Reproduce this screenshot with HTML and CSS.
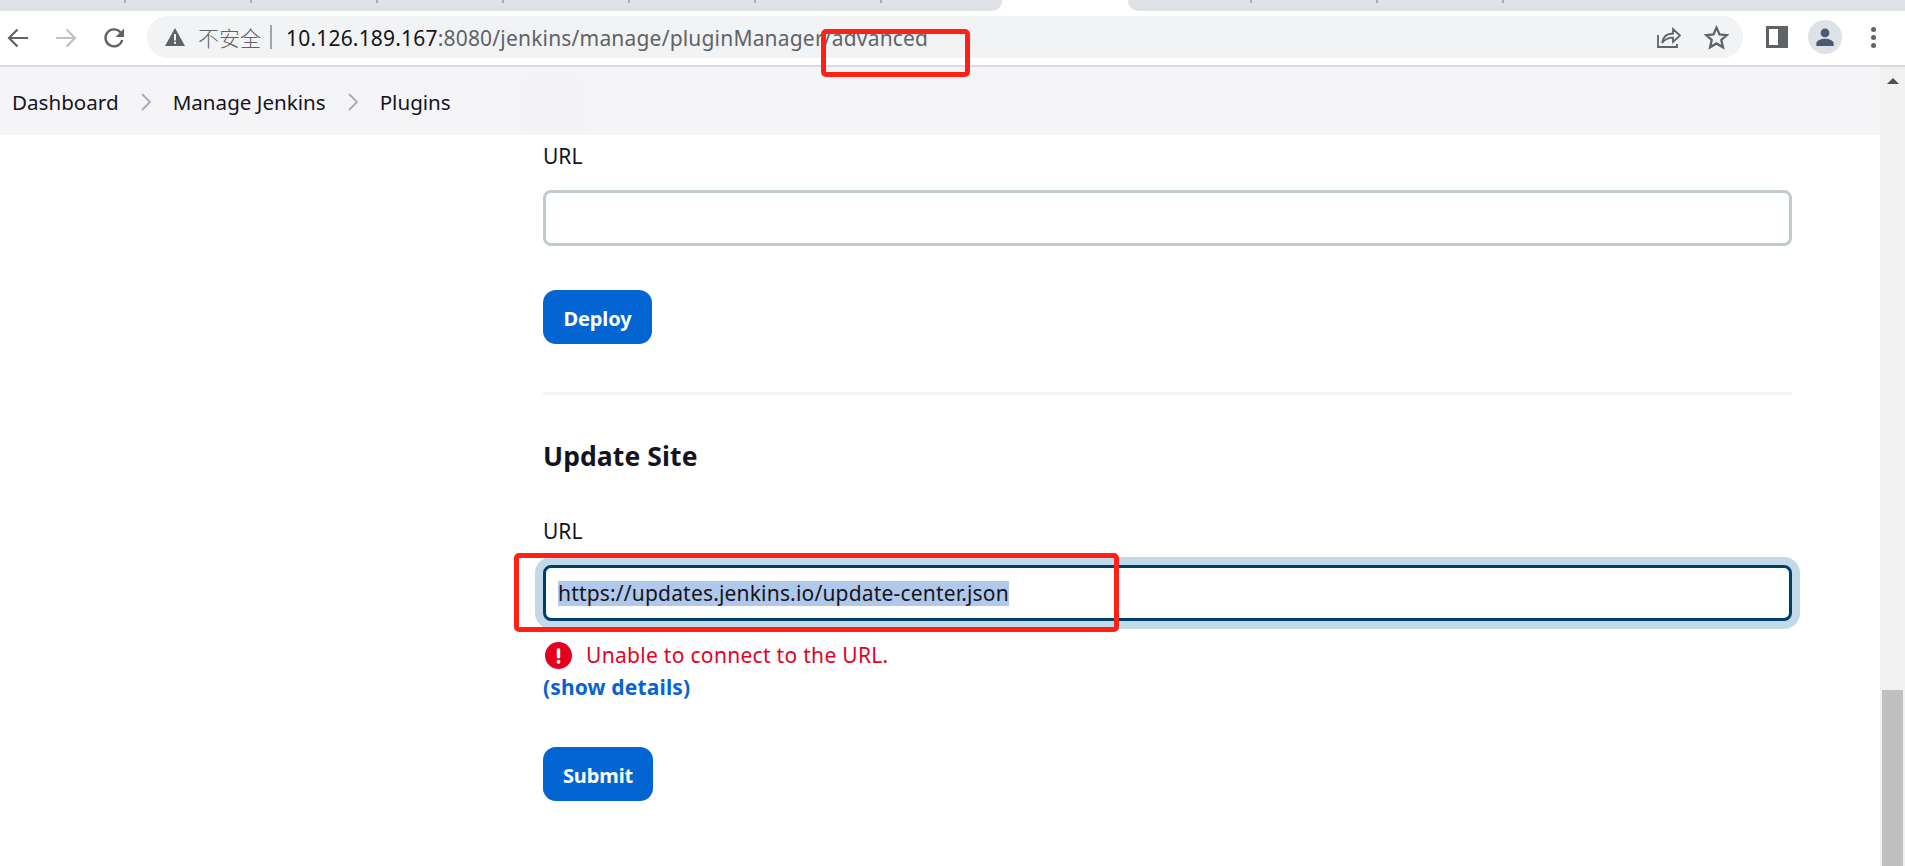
FILE: index.html
```html
<!DOCTYPE html>
<html lang="en">
<head>
<meta charset="utf-8">
<title>Jenkins – Plugins</title>
<link rel="stylesheet" href="styles.css">
</head>
<body>
<header class="browser">
  <div class="tabstrip">
    <div class="tabs-left"><i></i><i></i><i></i><i></i><i></i><i></i><i></i></div>
    <div class="tab-active"></div>
    <div class="tabs-right"><i></i><i></i><i></i></div>
  </div>
  <div class="toolbar">
    <div class="nav">
      <svg class="nav-icon" viewBox="0 0 24 24"><path d="M22 12H4M11.500 3.500 3 12l8.500 8.500" fill="none" stroke="#5f6368" stroke-width="2.200"/></svg>
      <svg class="nav-icon" viewBox="0 0 24 24"><path d="M2 12h18M12.500 3.500 21 12l-8.500 8.500" fill="none" stroke="#bfc1c4" stroke-width="2.200"/></svg>
      <svg class="nav-icon" viewBox="0 0 24 24"><path d="M20.200 14a8.500 8.500 0 1 1-1.900-7.800" fill="none" stroke="#5f6368" stroke-width="2.300"/><path d="M22 2.500V11h-8.500z" fill="#5f6368"/></svg>
    </div>
    <div class="omnibox">
      <svg class="warn" viewBox="0 0 20 18"><path d="M10 0 20 18H0z" fill="#5f6368"/><rect x="9" y="6" width="2" height="6.500" fill="#f1f3f4"/><rect x="9" y="13.800" width="2" height="2" fill="#f1f3f4"/></svg>
      <span class="insecure">不安全</span>
      <span class="omni-sep"></span>
      <span class="address"><b class="host">10.126.189.167</b>:8080/jenkins/manage/pluginManager/advanced</span>
      <svg class="share" viewBox="0 0 24 22"><path d="M1 9v12h19v-3M5 17c1-6 5-9.500 11-9.500V3l7 6.500-7 6.500v-4.300c-4.500 0-8 1.500-11 5.300z" fill="none" stroke="#5f6368" stroke-width="1.800"/></svg>
      <svg class="star" viewBox="0 0 24 24"><path d="m12 2.500 2.900 6.500 7.100.700-5.400 4.700 1.600 7-6.200-3.700-6.200 3.700 1.600-7L2 9.700 9.100 9z" fill="none" stroke="#5f6368" stroke-width="2.200"/></svg>
    </div>
    <div class="panel-icon"><span></span></div>
    <div class="avatar">
      <svg viewBox="0 0 22 22"><circle cx="11" cy="6.500" r="4.800" fill="#4b5a73"/><path d="M1.500 21v-3c0-3 5-5 9.500-5s9.500 2 9.500 5v3z" fill="#4b5a73"/></svg>
    </div>
    <div class="menu-dots"><i></i><i></i><i></i></div>
  </div>
</header>

<div class="viewport">
  <div class="page">
    <nav class="breadcrumb">
      <span class="ghost"></span>
      <a class="crumb">Dashboard</a>
      <svg class="chev" viewBox="0 0 10 18"><path d="m1 1 8 8-8 8" fill="none" stroke="#a9a9b8" stroke-width="1.800"/></svg>
      <a class="crumb">Manage Jenkins</a>
      <svg class="chev" viewBox="0 0 10 18"><path d="m1 1 8 8-8 8" fill="none" stroke="#a9a9b8" stroke-width="1.800"/></svg>
      <a class="crumb">Plugins</a>
    </nav>
    <main class="content">
      <section class="deploy">
        <label class="label">URL</label>
        <div class="field"></div>
        <button class="btn btn-deploy">Deploy</button>
      </section>
      <hr class="rule">
      <section class="site">
        <h2 class="title">Update Site</h2>
        <label class="label">URL</label>
        <div class="field field-focus"><span class="selected">https://updates.jenkins.io/update-center.json</span></div>
        <div class="error">
          <svg class="error-icon" viewBox="0 0 28 28"><circle cx="14" cy="14" r="14" fill="#e6001f"/><rect x="12.200" y="6.500" width="3.600" height="10.500" rx="1.600" fill="#fff"/><circle cx="14" cy="20.500" r="2" fill="#fff"/></svg>
          <span>Unable to connect to the URL.</span>
        </div>
        <a class="details">(show details)</a>
        <button class="btn btn-submit">Submit</button>
      </section>
    </main>
  </div>
  <aside class="scrollbar">
    <span class="arrow"></span>
    <span class="thumb"></span>
  </aside>
</div>

<div class="mark mark-address"></div>
<div class="mark mark-field"></div>
</body>
</html>
```

FILE: styles.css
```css
* { box-sizing: border-box; }
html, body { margin: 0; height: 100%; overflow: hidden; }
body {
  background: #fff;
  color: #14141f;
  font-family: "Noto Sans", "Noto Sans CJK SC", sans-serif;
  display: flex;
  flex-direction: column;
}

/* browser chrome */
.browser { flex: none; height: 67px; border-bottom: 2px solid #d9dadd; background: #fff; }
.tabstrip { display: flex; height: 11px; }
.tabs-left, .tabs-right { background: #dee1e6; display: flex; }
.tabs-left { width: 1002px; border-bottom-right-radius: 10px; padding-left: 124px; gap: 124px; }
.tabs-right { flex: 1; border-bottom-left-radius: 10px; padding-left: 122px; gap: 124px; }
.tabs-left i, .tabs-right i { width: 2px; height: 3px; background: #a9acb2; }
.tab-active { width: 126px; background: #fff; }
.toolbar { display: flex; align-items: center; height: 54px; padding: 0 0 0 6px; position: relative; }
.nav { display: flex; gap: 24px; width: 141px; align-items: center; }
.nav-icon { width: 24px; height: 24px; flex: none; }
.omnibox {
  width: 1596px; height: 42px; margin-top: -2px;
  border-radius: 21px; background: #f1f3f4;
  display: flex; align-items: center; padding-left: 18px;
}
.warn { width: 20px; height: 18px; flex: none; }
.insecure { margin-left: 13px; font-size: 21px; color: #5f6368; font-family: "Noto Sans CJK SC", sans-serif; font-weight: 300; line-height: 1; }
.omni-sep { width: 2px; height: 24px; background: #a2a5a8; margin: 0 14px 0 9px; }
.address { font-size: 21px; color: #5f6368; flex: 1; white-space: nowrap; letter-spacing: 0.19px; padding-top: 2px; }
.host { font-weight: 400; color: #14141a; }
.share { width: 24px; height: 22px; flex: none; margin-right: 23px; }
.star { width: 25px; height: 25px; flex: none; margin-right: 14px; }
.panel-icon {
  width: 22px; height: 22px; margin: -2px 0 0 23px;
  background: #5f6368; padding: 3px 10px 3px 3px;
}
.panel-icon span { display: block; height: 100%; background: #fff; }
.avatar {
  width: 34px; height: 34px; margin: -2px 0 0 20px; border-radius: 50%;
  background: #dee1e6; display: flex; align-items: center; justify-content: center;
}
.avatar svg { width: 20px; height: 20px; }
.menu-dots { display: flex; flex-direction: column; gap: 3px; margin: -2px 0 0 29px; }
.menu-dots i { width: 5px; height: 5px; border-radius: 50%; background: #5f6368; }

/* viewport */
.viewport { flex: 1; display: flex; min-height: 0; }
.page { flex: 1; min-width: 0; }
.breadcrumb {
  height: 68px; background: #f5f5f8; position: relative;
  display: flex; align-items: center; padding: 2px 0 0 12px;
  font-size: 20.600px;
}
.crumb { color: #14141f; }
.chev { width: 10px; height: 18px; margin: 0 22px; flex: none; }
.ghost {
  position: absolute; left: 520px; top: 6px; width: 70px; height: 62px;
  border-radius: 14px; background: #f4f4f7;
}
.content { padding: 7px 88px 0 543px; }
.label { display: block; font-size: 21px; line-height: 28px; }
.field {
  height: 56px; margin-top: 20px; border: 3px solid #c0cbd0; border-radius: 8px; background: #fff;
  display: flex; align-items: center; padding: 1px 0 0 12px;
  font-size: 21px; letter-spacing: 0.18px;
}
.field-focus {
  margin-top: 20px; border-color: #003f6b; box-shadow: 0 0 0 8px #c2d9e8;
}
.selected { background: #b0c8e9; line-height: 25px; }
.btn {
  display: block; height: 54px; border: 0; border-radius: 13px;
  background: #0265d2; color: #fff; font: 700 20px "Noto Sans", sans-serif; letter-spacing: -0.1px; padding: 2px 0 0;
}
.btn-deploy { width: 109px; margin-top: 44px; }
.btn-submit { width: 110px; margin-top: 46px; }
.rule { height: 3px; margin: 48px 0 0; border: 0; background: #f3f4f8; }
.title { margin: 43px 0 0; font-size: 26.500px; line-height: 36px; font-weight: 700; letter-spacing: 0.1px; }
.site .label { margin-top: 43px; }
.error { display: flex; align-items: center; gap: 14px; margin: 20px 0 0 2px; color: #e6001f; font-size: 21px; line-height: 28px; letter-spacing: 0.3px; }
.error-icon { width: 27px; height: 27px; flex: none; }
.details { display: block; margin-top: 4px; color: #0763d3; font-weight: 700; font-size: 21px; line-height: 28px; letter-spacing: 0.15px; }

/* scrollbar */
.scrollbar { flex: none; width: 25px; background: #f1f1f1; padding: 11px 2px 0; display: flex; flex-direction: column; align-items: center; position: relative; }
.arrow { width: 0; height: 0; border: 6px solid transparent; border-top: 0; border-bottom-color: #505050; }
.thumb { position: absolute; left: 2px; right: 2px; top: 623px; bottom: 0; background: #c0c0c0; }

/* annotation boxes drawn over the screenshot */
.mark { position: absolute; border: 5px solid #ff2116; border-radius: 5px; }
.mark-address { left: 821px; top: 29px; width: 149px; height: 48px; }
.mark-field { left: 514px; top: 553px; width: 605px; height: 79px; }
```
